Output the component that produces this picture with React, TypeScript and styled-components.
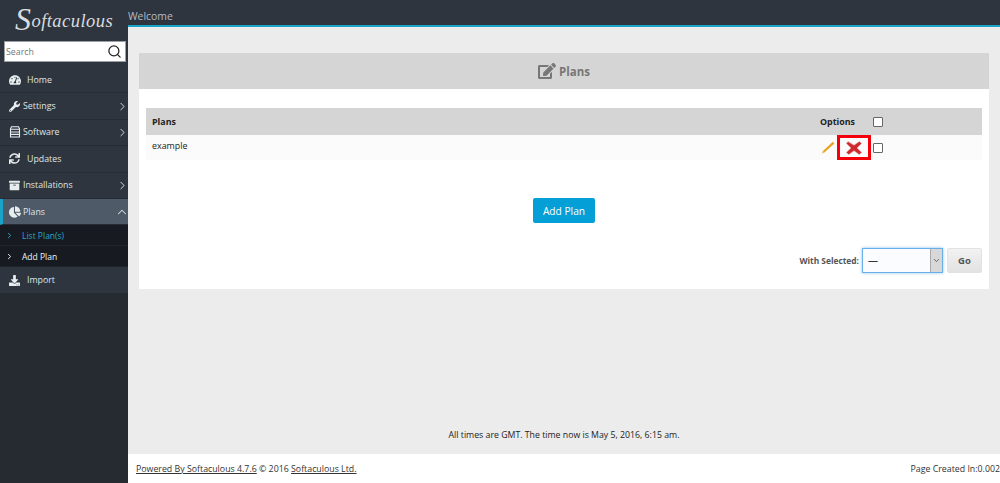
import React from "react";
import styled, { createGlobalStyle } from "styled-components";
import { FaTachometerAlt, FaWrench, FaSync, FaChartPie, FaDownload, FaEdit, FaArchive } from "react-icons/fa";
import { ChevronRight, ChevronUp, ChevronDown, Search as SearchIcon } from "lucide-react";

const Global = createGlobalStyle`
  html, body { margin: 0; padding: 0; height: 100%; overflow: hidden; }
  body { font-family: "Open Sans", "Liberation Sans", sans-serif; font-size: 9px; color: #222; }
  * { box-sizing: border-box; }
`;
const Page = styled.div`
  width: 1000px; height: 483px; display: grid; grid-template-columns: 128px 1fr; background: #ececec;
`;
const Sidebar = styled.aside`
  background: #262a31; color: #dfe5e8; display: flex; flex-direction: column;
`;
const LogoBar = styled.div`
  height: 41px; background: #2e353f;
`;
const Logo = styled.div`
  padding: 4px 0 0 15px; font-family: "Liberation Serif", serif; font-style: italic; font-size: 18.5px;
  color: #d8dcdf; line-height: 30px; white-space: nowrap; letter-spacing: 0.45px;
  b { font-weight: 400; font-size: 32px; line-height: 30px; vertical-align: -3px; margin-right: 0; }
`;
const SearchWrap = styled.div`
  background: #2e353f; padding: 0 2px 5px 4px;
`;
const SearchBox = styled.div`
  height: 21px; background: #fff; border: 1px solid #9aa0a6; display: flex; align-items: center;
  justify-content: space-between; padding: 0 3px 0 1px; color: #777; font-size: 8.8px; svg { color: #222; }
`;
const Nav = styled.nav`
  display: flex; flex-direction: column;
`;
const Item = styled.div<{ $active?: boolean }>`
  height: 26.4px; display: flex; align-items: center; font-size: 8.8px; color: #dfe5e8;
  padding-left: ${p => (p.$active ? 6 : 9)}px; border-bottom: 1px solid #262c35;
  background: ${p => (p.$active ? "#4f5a69" : "#2e353f")};
  border-left: ${p => (p.$active ? "3px solid #1aa3c8" : "none")};
`;
const IconSlot = styled.span<{ $w: number }>`
  width: ${p => p.$w}px; display: inline-flex; align-items: center; color: #e8eef0; flex: none;
`;
const Caret = styled.span`
  margin-left: auto; margin-right: -1px; display: inline-flex; color: #d5dade;
`;
const SubItem = styled.div<{ $current?: boolean }>`
  height: 21px; background: #171b21; border-bottom: 1px solid #20252c; display: flex; align-items: center;
  padding-left: 5px; font-size: 8.5px; color: ${p => (p.$current ? "#2aa5c9" : "#eef1f3")};
  span { width: 17px; display: inline-flex; }
`;
const Main = styled.main`
  display: flex; flex-direction: column; min-width: 0;
`;
const TopBar = styled.header`
  height: 27px; background: #2e353f; border-bottom: 2px solid #1aa3c8; color: #b4bcc3; font-size: 10.4px; line-height: 32px;
`;
const Content = styled.div`
  flex: 1; padding: 26px 11px 0; display: flex; flex-direction: column;
`;
const Panel = styled.section`
  background: #fff; height: 236px; display: flex; flex-direction: column;
`;
const PanelHead = styled.div`
  height: 36px; background: #d5d5d5; display: flex; align-items: center; justify-content: center; gap: 3px;
  color: #777; font-size: 11.5px; font-weight: 700;
`;
const Table = styled.div`
  margin: 19px 7px 0; display: flex; flex-direction: column;
`;
const Row = styled.div<{ $head?: boolean }>`
  height: ${p => (p.$head ? 27 : 25)}px; display: flex; justify-content: space-between; align-items: center;
  background: ${p => (p.$head ? "#d5d5d5" : "#fbfbfb")};
  padding: 0 99px 0 6px; font-size: 8.9px; color: #222; font-weight: ${p => (p.$head ? 700 : 400)};
`;
const RowLabel = styled.span<{ $up?: boolean }>`
  position: relative; top: ${p => (p.$up ? -2 : 0)}px;
`;
const HeadCols = styled.div`
  display: flex; align-items: center; gap: 18px;
`;
const Tools = styled.div`
  display: flex; align-items: center; gap: 2px;
`;
const Check = styled.span`
  width: 10px; height: 10px; border: 1px solid #666; background: #fff; border-radius: 1px; display: block;
`;
const DeleteBox = styled.span`
  width: 34px; height: 25px; border: 3px solid #f5000a; display: inline-flex; align-items: center; justify-content: center; background: #fbfbfb;
`;
const Center = styled.div`
  display: flex; justify-content: center; margin-top: 38px;
`;
const PrimaryButton = styled.button`
  width: 62px; height: 25px; background: #039fd6; color: #fff; border: 0; border-radius: 2px; font: 400 10.2px "Open Sans", sans-serif; padding: 0;
`;
const Actions = styled.div`
  margin: 25px 7px 0 0; display: flex; justify-content: flex-end; align-items: center; font-size: 8.4px; font-weight: 700; color: #555;
`;
const SelectBox = styled.div`
  width: 81px; height: 25px; margin: 0 4px 0 3px; border: 1px solid #6aaee8; box-shadow: 0 0 3px #8cc4f0; background: #fafcff;
  display: flex; align-items: stretch; justify-content: space-between; padding-left: 5px; color: #333; font-weight: 400; font-size: 10px; line-height: 22px;
`;
const SelectArrow = styled.span`
  width: 12px; background: #d8d8d8; border-left: 1px solid #aaa; display: flex; align-items: center; justify-content: center; color: #444;
`;
const GoButton = styled.button`
  width: 35px; height: 25px; border: 1px solid #e2e2e2; border-radius: 2px; background: linear-gradient(#f2f2f2, #e2e2e2); color: #555; font: 700 9.5px "Open Sans", sans-serif; padding: 0;
`;
const TimeNote = styled.div`
  margin-top: auto; height: 25px; text-align: center; font-size: 8.75px; color: #222;
`;
const Footer = styled.footer`
  height: 29px; background: #fff; display: flex; align-items: center; justify-content: space-between; padding: 0 0 0 8px; font-size: 8.8px; color: #333; white-space: nowrap;
  a { color: #333; text-decoration: underline; }
`;

const SoftwareIcon = () => (
  <svg width="12" height="12" viewBox="0 0 12 12">
    <path d="M2.5 .8 h7 l1 2 v8.2 h-9 v-8.2 z" fill="none" stroke="#e8eef0" strokeWidth="1.1" />
    <path d="M1.5 3.2 h9 M2 6 h8 M2 8.4 h8" stroke="#e8eef0" strokeWidth="1.1" />
  </svg>
);
const Pencil = () => (
  <svg width="14" height="13" viewBox="0 0 14 13">
    <path d="M.8 12.4 L2 10 L11.8 .8 L13.4 2.4 L3.4 11.4 Z" fill="#e8a21c" />
    <path d="M.8 12.4 L2 10 L3.4 11.4 Z" fill="#dccfb2" />
  </svg>
);
const RedX = () => (
  <svg width="16" height="14" viewBox="0 0 16 14">
    <path d="M2 .6 L8 4.2 L13.4 .4 L15.6 2.6 L11 7 L15.8 11.4 L13.2 13.6 L8 9.8 L2.8 13.6 L.3 11.4 L5 7 L.4 2.6 Z" fill="#cf2a30" stroke="#e8a8a8" strokeWidth=".6" />
  </svg>
);

export default function App() {
  return (
    <Page>
      <Global />
      <Sidebar>
        <LogoBar><Logo><b>S</b>oftaculous</Logo></LogoBar>
        <SearchWrap><SearchBox>Search<SearchIcon size={15} strokeWidth={2} /></SearchBox></SearchWrap>
        <Nav>
          <Item><IconSlot $w={18}><FaTachometerAlt size={12} /></IconSlot>Home</Item>
          <Item><IconSlot $w={14}><FaWrench size={11} /></IconSlot>Settings<Caret><ChevronRight size={13} strokeWidth={1.8} /></Caret></Item>
          <Item><IconSlot $w={14}><SoftwareIcon /></IconSlot>Software<Caret><ChevronRight size={13} strokeWidth={1.8} /></Caret></Item>
          <Item><IconSlot $w={18}><FaSync size={11} /></IconSlot>Updates</Item>
          <Item><IconSlot $w={14}><FaArchive size={11} /></IconSlot>Installations<Caret><ChevronRight size={13} strokeWidth={1.8} /></Caret></Item>
          <Item $active><IconSlot $w={14}><FaChartPie size={12} /></IconSlot>Plans<Caret><ChevronUp size={14} strokeWidth={1.8} /></Caret></Item>
          <SubItem $current><span><ChevronRight size={9} strokeWidth={2.5} /></span>List Plan(s)</SubItem>
          <SubItem><span><ChevronRight size={9} strokeWidth={2.5} /></span>Add Plan</SubItem>
          <Item><IconSlot $w={18}><FaDownload size={11} /></IconSlot>Import</Item>
        </Nav>
      </Sidebar>
      <Main>
        <TopBar>Welcome</TopBar>
        <Content>
          <Panel>
            <PanelHead><FaEdit size={18} />Plans</PanelHead>
            <Table>
              <Row $head>
                <span>Plans</span>
                <HeadCols><span>Options</span><Check /></HeadCols>
              </Row>
              <Row>
                <RowLabel $up>example</RowLabel>
                <Tools><Pencil /><DeleteBox><RedX /></DeleteBox><Check /></Tools>
              </Row>
            </Table>
            <Center><PrimaryButton>Add Plan</PrimaryButton></Center>
            <Actions>
              With Selected:
              <SelectBox>—<SelectArrow><ChevronDown size={9} strokeWidth={2} /></SelectArrow></SelectBox>
              <GoButton>Go</GoButton>
            </Actions>
          </Panel>
          <TimeNote>All times are GMT. The time now is May 5, 2016, 6:15 am.</TimeNote>
        </Content>
        <Footer>
          <span><a>Powered By Softaculous 4.7.6</a> © 2016 <a>Softaculous Ltd.</a></span>
          <span>Page Created In:0.002</span>
        </Footer>
      </Main>
    </Page>
  );
}
